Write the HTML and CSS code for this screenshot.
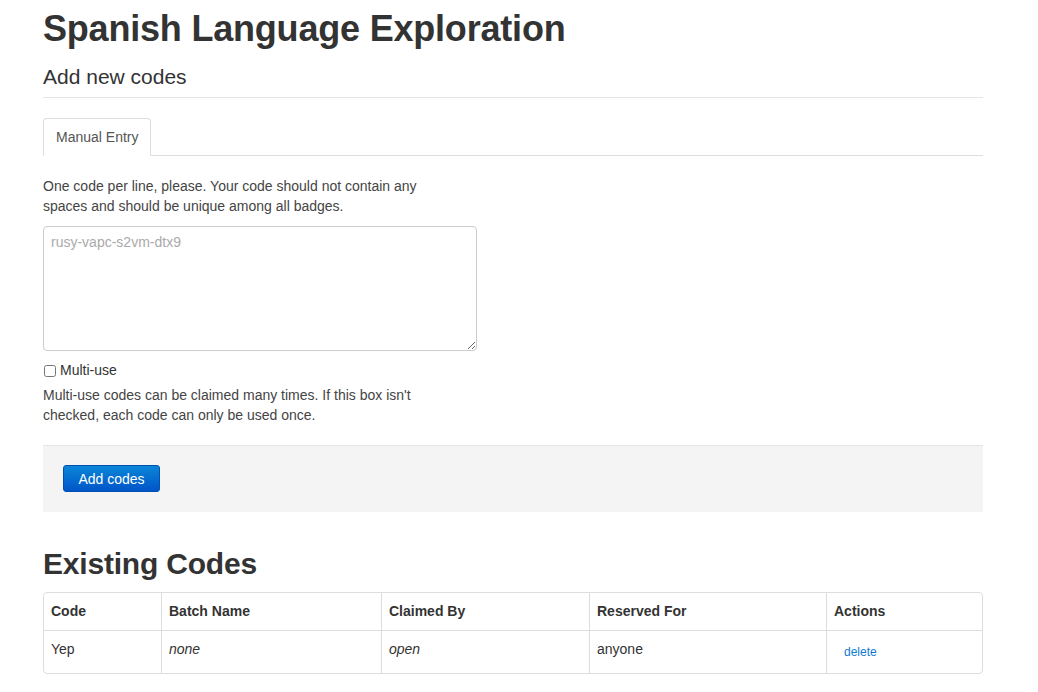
FILE: index.html
```html
<!DOCTYPE html>
<html>
<head>
<meta charset="utf-8">
<link rel="stylesheet" href="styles.css">
</head>
<body>
<div class="container">
  <h1 class="title">Spanish Language Exploration</h1>
  <h3 class="subtitle">Add new codes</h3>
  <ul class="tabs">
    <li class="tab active">Manual Entry</li>
  </ul>
  <form class="entry">
    <p class="help">One code per line, please. Your code should not contain any spaces and should be unique among all badges.</p>
    <textarea class="codes" placeholder="rusy-vapc-s2vm-dtx9"></textarea>
    <label class="check"><input type="checkbox"> Multi-use</label>
    <p class="help">Multi-use codes can be claimed many times. If this box isn't checked, each code can only be used once.</p>
    <div class="actions">
      <button type="button" class="btn">Add codes</button>
    </div>
  </form>
  <h1 class="section">Existing Codes</h1>
  <table class="codes-table">
    <thead>
      <tr>
        <th class="c1">Code</th>
        <th class="c2">Batch Name</th>
        <th class="c3">Claimed By</th>
        <th class="c4">Reserved For</th>
        <th class="c5">Actions</th>
      </tr>
    </thead>
    <tbody>
      <tr>
        <td>Yep</td>
        <td><em>none</em></td>
        <td><em>open</em></td>
        <td>anyone</td>
        <td><a href="#" class="del">delete</a></td>
      </tr>
    </tbody>
  </table>
</div>
</body>
</html>
```
FILE: styles.css
```css
html, body {
  margin: 0;
  padding: 0;
  background: #fff;
}
body {
  font-family: "Liberation Sans", Arial, sans-serif;
  font-size: 14px;
  line-height: 20px;
  color: #333;
}
.container {
  width: 940px;
  margin-left: 43px;
}
.title {
  font-size: 36px;
  line-height: 40px;
  font-weight: bold;
  margin: 9px 0 0;
  letter-spacing: -0.2px;
}
.subtitle {
  font-size: 21px;
  font-weight: normal;
  line-height: 24px;
  margin: 16px 0 0;
  padding-bottom: 8px;
  border-bottom: 1px solid #e5e5e5;
}
.tabs {
  list-style: none;
  margin: 20px 0 0;
  padding: 0;
  display: flex;
  border-bottom: 1px solid #ddd;
}
.tab {
  font-size: 14px;
  line-height: 20px;
  padding: 8px 12px;
  border: 1px solid #ddd;
  border-bottom-color: #fff;
  border-radius: 4px 4px 0 0;
  margin-bottom: -1px;
  background: #fff;
  color: #555;
  white-space: nowrap;
}
.entry {
  margin-top: 20px;
}
.help {
  width: 400px;
  margin: 0;
  color: #444;
}
.codes {
  display: block;
  box-sizing: border-box;
  width: 434px;
  height: 125px;
  margin: 10px 0 0;
  border: 1px solid #ccc;
  border-radius: 4px;
  padding: 5px 7px;
  font-family: "Liberation Sans", Arial, sans-serif;
  font-size: 14px;
  line-height: 20px;
  color: #333;
}
.codes::placeholder {
  color: #aaa;
}
.check {
  display: flex;
  align-items: center;
  gap: 4px;
  margin-top: 9px;
  height: 20px;
  color: #333;
}
.check input {
  margin: 1px 0 0 1px;
  width: 12px;
  height: 12px;
}
.entry .help:last-of-type {
  margin-top: 5px;
}
.actions {
  margin-top: 20px;
  background: #f4f4f4;
  border-top: 1px solid #e5e5e5;
  padding: 19px 20px 20px;
}
.btn {
  display: block;
  width: 97px;
  height: 27px;
  border: 1px solid #0050b0;
  border-radius: 3px;
  background: linear-gradient(#0a86d8, #0055c8);
  color: #fff;
  font-family: "Liberation Sans", Arial, sans-serif;
  font-size: 14px;
  padding: 0;
}
.section {
  font-size: 30px;
  line-height: 36px;
  font-weight: bold;
  margin: 34px 0 0;
  letter-spacing: -0.2px;
}
.codes-table {
  margin-top: 10px;
  width: 940px;
  border-collapse: separate;
  border-spacing: 0;
  border: 1px solid #ddd;
  border-radius: 4px;
}
.codes-table th, .codes-table td {
  text-align: left;
  padding: 8px 8px 8px 7px;
  line-height: 20px;
  border-left: 1px solid #ddd;
  vertical-align: top;
}
.codes-table th:first-child, .codes-table td:first-child {
  border-left: none;
}
.codes-table th {
  font-weight: bold;
  padding-top: 8px;
  padding-bottom: 9px;
}
.codes-table td {
  border-top: 1px solid #ddd;
  padding-bottom: 13px;
}
.c1 { width: 102px; }
.c2 { width: 204px; }
.c3 { width: 192px; }
.c4 { width: 221px; }
.del {
  color: #0f7ad6;
  text-decoration: none;
  font-size: 12px;
  margin-left: 10px;
  position: relative;
  top: 2px;
}
```
